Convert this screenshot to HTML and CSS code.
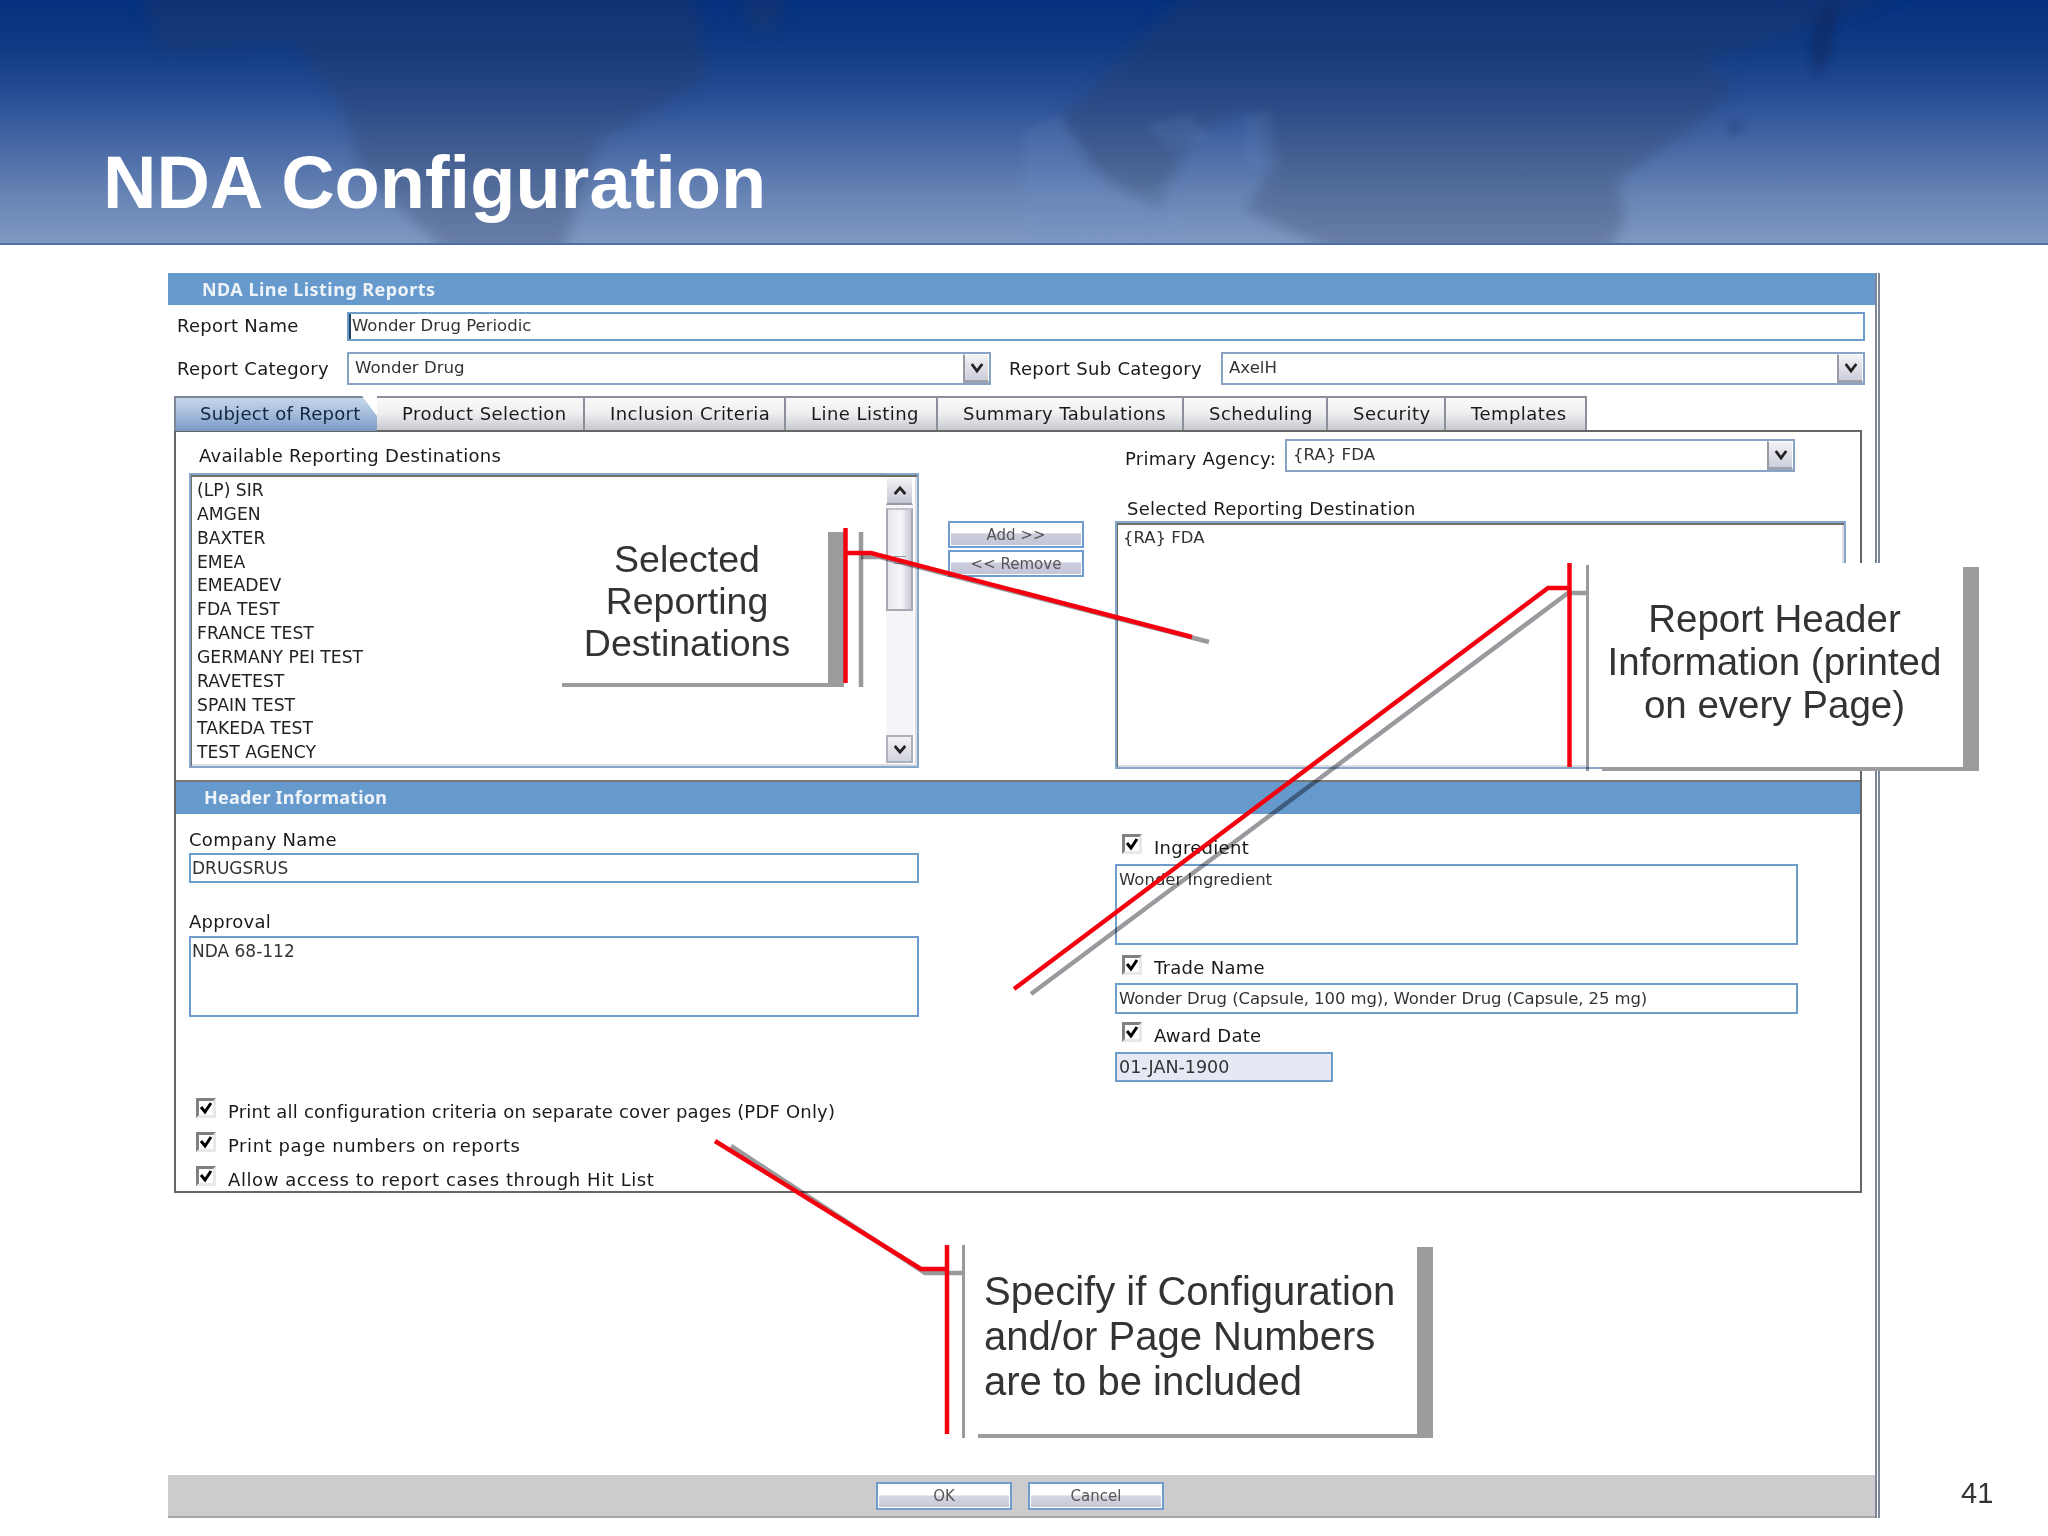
FILE: index.html
```html
<!DOCTYPE html>
<html lang="en">
<head>
<meta charset="utf-8">
<title>NDA Configuration</title>
<link rel="stylesheet" href="styles.css">
</head>
<body>
<div class="slide">
  <header class="banner">
    <svg class="map" viewBox="0 0 2048 243" preserveAspectRatio="none" aria-hidden="true">
      <defs>
        <filter id="soft"><feGaussianBlur stdDeviation="7"/></filter>
        <filter id="softer"><feGaussianBlur stdDeviation="4"/></filter>
      </defs>
      <g filter="url(#soft)" fill="#2a3a5c" opacity=".28">
        <path d="M137 -10 160 50 295 45 345 110 360 170 455 260 560 260 600 140 705 80 700 -10Z"/>
        <path d="M735 -10 790 -10 775 35 750 30Z"/>
        <path d="M1187 -10 1912 -10 1808 30 1704 60 1735 85 1704 120 1658 152 1618 180 1625 217 1605 260 1350 260 1246 210 1270 170 1250 110 1200 130 1180 160 1160 210 1090 170 1060 120 1120 60Z"/>
      </g>
      <g filter="url(#softer)" fill="#7394cc" opacity=".16">
        <path d="M1024 130 1060 115 1100 170 1130 200 1175 175 1180 240 1024 243Z"/>
        <path d="M1145 125 1190 115 1210 140 1170 150Z"/>
        <path d="M1245 115 1270 110 1280 170 1250 170Z"/>
      </g>
      <g filter="url(#softer)" fill="#0c2454" opacity=".4">
        <path d="M1815 15 1840 0 1830 60 1815 78 1810 50Z"/>
        <path d="M1730 120 1742 128 1730 135Z"/>
      </g>
    </svg>
    <h1 class="title">NDA Configuration</h1>
  </header>

  <main class="window">
    <div class="bar bar-top">NDA Line Listing Reports</div>

    <div class="row row-name">
      <span class="label">Report Name</span>
      <div class="field field-caret">Wonder Drug Periodic</div>
    </div>

    <div class="row row-cat">
      <span class="label">Report Category</span>
      <div class="select select-cat">
        <span class="select-value">Wonder Drug</span>
        <span class="select-btn"><svg viewBox="0 0 16 12"><path d="M2 2 8 10 14 2"/></svg></span>
      </div>
      <span class="label label-sub">Report Sub Category</span>
      <div class="select select-sub">
        <span class="select-value">AxelH</span>
        <span class="select-btn"><svg viewBox="0 0 16 12"><path d="M2 2 8 10 14 2"/></svg></span>
      </div>
    </div>

    <nav class="tabs">
      <span class="tab tab-active">Subject of Report</span>
      <span class="tab">Product Selection</span>
      <span class="tab">Inclusion Criteria</span>
      <span class="tab">Line Listing</span>
      <span class="tab">Summary Tabulations</span>
      <span class="tab">Scheduling</span>
      <span class="tab">Security</span>
      <span class="tab">Templates</span>
    </nav>

    <section class="panel">
      <div class="upper">
        <div class="col-left">
          <div class="cap">Available Reporting Destinations</div>
          <div class="listbox listbox-avail">
            <ul class="items">
              <li>(LP) SIR</li>
              <li>AMGEN</li>
              <li>BAXTER</li>
              <li>EMEA</li>
              <li>EMEADEV</li>
              <li>FDA TEST</li>
              <li>FRANCE TEST</li>
              <li>GERMANY PEI TEST</li>
              <li>RAVETEST</li>
              <li>SPAIN TEST</li>
              <li>TAKEDA TEST</li>
              <li>TEST AGENCY</li>
            </ul>
            <div class="scroll">
              <span class="scroll-btn"><svg viewBox="0 0 16 12"><path d="M2 10 8 3 14 10"/></svg></span>
              <span class="scroll-thumb"><i class="grip"></i></span>
              <span class="scroll-btn scroll-down"><svg viewBox="0 0 16 12"><path d="M2 2 8 9 14 2"/></svg></span>
            </div>
          </div>
        </div>
        <div class="col-mid">
          <span class="btn btn-small">Add &gt;&gt;</span>
          <span class="btn btn-small">&lt;&lt; Remove</span>
        </div>
        <div class="col-right">
          <div class="agency">
            <span class="label label-agency">Primary Agency:</span>
            <div class="select select-agency">
              <span class="select-value">{RA} FDA</span>
              <span class="select-btn"><svg viewBox="0 0 16 12"><path d="M2 2 8 10 14 2"/></svg></span>
            </div>
          </div>
          <div class="cap cap-selected">Selected Reporting Destination</div>
          <div class="listbox listbox-sel"><div class="sel-value">{RA} FDA</div></div>
        </div>
      </div>

      <div class="bar bar-header">Header Information</div>

      <div class="lower">
        <div class="lower-left">
          <div class="cap cap-form">Company Name</div>
          <div class="field field-company">DRUGSRUS</div>
          <div class="cap cap-form cap-approval">Approval</div>
          <div class="field field-approval">NDA 68-112</div>
          <div class="checks">
            <label class="check check-tight"><span class="box"><svg viewBox="0 0 14 14"><path d="M2 6 6 11 12 2"/></svg></span>Print all configuration criteria on separate cover pages (PDF Only)</label>
            <label class="check check-wide"><span class="box"><svg viewBox="0 0 14 14"><path d="M2 6 6 11 12 2"/></svg></span>Print page numbers on reports</label>
            <label class="check check-wide"><span class="box"><svg viewBox="0 0 14 14"><path d="M2 6 6 11 12 2"/></svg></span>Allow access to report cases through Hit List</label>
          </div>
        </div>
        <div class="lower-right">
          <label class="check check-right"><span class="box"><svg viewBox="0 0 14 14"><path d="M2 6 6 11 12 2"/></svg></span>Ingredient</label>
          <div class="field field-ingredient">Wonder Ingredient</div>
          <label class="check check-right check-trade"><span class="box"><svg viewBox="0 0 14 14"><path d="M2 6 6 11 12 2"/></svg></span>Trade Name</label>
          <div class="field field-trade">Wonder Drug (Capsule, 100 mg), Wonder Drug (Capsule, 25 mg)</div>
          <label class="check check-right check-award"><span class="box"><svg viewBox="0 0 14 14"><path d="M2 6 6 11 12 2"/></svg></span>Award Date</label>
          <div class="field field-date">01-JAN-1900</div>
        </div>
      </div>
    </section>

    <footer class="footer">
      <span class="btn btn-foot">OK</span>
      <span class="btn btn-foot">Cancel</span>
    </footer>
  </main>

  <div class="page-number">41</div>

  <aside class="callout callout-dest">Selected<br>Reporting<br>Destinations</aside>
  <aside class="callout callout-head">Report Header<br>Information (printed<br>on every Page)</aside>
  <aside class="callout callout-spec">Specify if Configuration<br>and/or Page Numbers<br>are to be included</aside>

  <svg class="leaders" viewBox="0 0 2048 1536" aria-hidden="true">
    <g class="lead-grey">
      <path d="M861 532V687"/>
      <path d="M861 557H880L1209 642"/>
      <path d="M1587.500 565V771" class="thin"/>
      <path d="M1586 593H1568L1031 994"/>
      <path d="M963.500 1245V1438" class="thin"/>
      <path d="M962 1273H925L731 1146"/>
    </g>
    <g class="lead-red">
      <path d="M845.500 528V683"/>
      <path d="M847 553H871L1192 637"/>
      <path d="M1569.500 563V767"/>
      <path d="M1570 588H1548L1014 989"/>
      <path d="M947 1245V1434"/>
      <path d="M947 1269H921L715 1141"/>
    </g>
  </svg>
</div>
</body>
</html>
```

FILE: styles.css
```css
* { box-sizing: border-box; }
html, body { margin: 0; padding: 0; background: #fff; }
body { font-family: "DejaVu Sans", "Liberation Sans", sans-serif; color: #1a1a1a; }

.slide { position: relative; width: 2048px; height: 1536px; overflow: hidden; background: #fff; }

/* banner */
.banner {
  position: relative;
  height: 245px;
  border-bottom: 2px solid #4f6ea8;
  background: linear-gradient(180deg, #04307f 0%, #113b84 20%, #2a5096 42%, #4a6ba6 62%, #6a86b6 82%, #8098c2 100%);
  padding: 141px 0 0 103px;
}
.map { position: absolute; inset: 0; width: 100%; height: 100%; }
.title {
  position: relative;
  margin: 0;
  font: 700 74px/84px "Liberation Sans", Arial, sans-serif;
  color: #fff;
}

/* window */
.window {
  display: flex;
  flex-direction: column;
  width: 1712px;
  height: 1245px;
  margin: 28px 0 0 168px;
  border-right: 5px double #7d8799;
}
.bar {
  background: #6699cc;
  color: #eef3f9;
  font-family: "Noto Sans", "Liberation Sans", sans-serif;
  font-weight: 700;
  font-size: 18px;
  letter-spacing: .2px;
}
.bar-top { height: 32px; line-height: 33px; padding-left: 34px; letter-spacing: .45px; }

.row { display: flex; align-items: center; padding-left: 9px; }
.row-name { margin-top: 7px; height: 29px; }
.row-cat { margin-top: 11px; height: 33px; }
.label { font-size: 18px; letter-spacing: .28px; white-space: nowrap; color: #1a1a1a; }
.row > .label:first-child { width: 170px; flex: none; }
.row-name .label { padding-bottom: 2px; }
.label-sub { margin-left: 18px; width: 212px; flex: none; }

.field {
  border: 2px solid #6f9dcb;
  background: #fff;
  color: #333;
  font-size: 16.500px;
  line-height: 27px;
  padding-left: 2px;
  white-space: nowrap;
}
.row-name .field { width: 1518px; height: 29px; box-shadow: inset 2px 0 0 #24405f; padding-left: 3px; line-height: 24px; }

.select {
  display: flex;
  justify-content: space-between;
  height: 33px;
  border: 2px solid #87a3c6;
  background: #fff;
  color: #333;
  font-size: 16.600px;
  line-height: 28px;
}
.select-value { padding-left: 6px; }
.select-cat { width: 644px; }
.select-sub { width: 644px; }
.select-agency { width: 510px; }
.select-btn {
  display: flex;
  align-items: center;
  justify-content: center;
  width: 26px;
  border: 1px solid #fff;
  border-left: 2px solid #9a9aa6;
  border-bottom: 3px solid #9ea1ad;
  background: linear-gradient(180deg, #f2f2f6, #ccced9);
}
.select-btn svg, .scroll-btn svg { width: 14px; height: 11px; }
.select-btn path, .scroll-btn path { fill: none; stroke: #222; stroke-width: 3.200; }

/* tabs */
.tabs {
  display: grid;
  grid-template-columns: 203px 208px 201px 152px 246px 144px 118px 141px;
  width: max-content;
  height: 34px;
  margin: 11px 0 0 6px;
}
.tab {
  padding-left: 25px;
  border: 2px solid #8b8f9b;
  border-width: 2px 2px 0 0;
  background: linear-gradient(180deg, #fafafa 0%, #efeff1 45%, #c6c8cf 100%);
  font-size: 18px;
  letter-spacing: .45px;
  line-height: 31px;
  white-space: nowrap;
  color: #1a1a1a;
}
.tab-active {
  padding-left: 26px;
  border: 0;
  background: linear-gradient(180deg, #c9d8ec 0%, #a6bedd 50%, #7a9ac4 100%);
  clip-path: polygon(0 0, 188px 0, 100% 20px, 100% 100%, 0 100%);
  box-shadow: inset 2px 2px 0 #7d8696;
  color: #10233f;
  letter-spacing: .28px;
  line-height: 35px;
}

.panel {
  display: flex;
  flex-direction: column;
  width: 1688px;
  height: 763px;
  margin-left: 6px;
  border: 2px solid #666;
}
.upper { display: flex; flex: none; height: 348px; padding-left: 13px; }
.col-left { width: 730px; padding-top: 12px; flex: none; }
.col-mid { display: flex; flex-direction: column; gap: 2px; width: 136px; margin-left: 29px; padding-top: 89px; flex: none; }
.col-right { width: 731px; margin-left: 31px; padding-top: 7px; flex: none; }

.cap { height: 24px; line-height: 24px; font-size: 18px; letter-spacing: .28px; color: #1a1a1a; white-space: nowrap; }
.col-left .cap { padding-left: 10px; }

.listbox {
  border: 2px solid #84a7cb;
  background: #fff;
  box-shadow: inset 1px 2px 0 #6e6e66, inset -2px -2px 0 #dedee2;
}
.listbox-avail { display: flex; height: 295px; margin-top: 5px; padding: 2px 4px 3px 0; }
.items {
  flex: 1;
  list-style: none;
  margin: 0;
  padding: 2px 0 0 6px;
  font-size: 17.200px;
  color: #222;
}
.items li { height: 23.850px; line-height: 23.850px; white-space: nowrap; }

.scroll { display: flex; flex-direction: column; width: 27px; background: #f4f4f9; }
.scroll-btn {
  display: flex;
  align-items: center;
  justify-content: center;
  height: 28px;
  border: 1px solid #fff;
  border-bottom: 2px solid #9a9aa6;
  background: linear-gradient(180deg, #f2f2f6, #c4c6d2);
}
.scroll-down { margin-top: auto; border: 2px solid #aeb0ba; background: linear-gradient(180deg, #f2f2f6, #d2d3dd); }
.scroll-thumb {
  display: flex;
  align-items: center;
  justify-content: center;
  height: 103px;
  margin-top: 3px;
  border: 2px solid #a8a8b2;
  border-top-color: #c0c0c8;
  background: linear-gradient(90deg, #e6e6ee, #f6f6fa 55%, #c8c9d6);
}
.grip { display: block; width: 12px; height: 8px; border-top: 1px solid #9a9aa6; border-bottom: 1px solid #9a9aa6; }

.btn {
  display: block;
  text-align: center;
  color: #555;
  border: 2px solid #6f9dd0;
  box-shadow: inset 0 0 0 1px #fff;
  white-space: nowrap;
}
.btn-small {
  height: 27px;
  font-size: 15px;
  line-height: 24px;
  background: linear-gradient(180deg, #fff 0%, #fff 45%, #cbccdc 46%, #c4c5d6 100%);
}

.agency { display: flex; align-items: center; height: 33px; padding-left: 10px; }
.label-agency { width: 160px; flex: none; position: relative; top: 3px; }
.select-agency .select-value { line-height: 28px; }
.cap-selected { margin-top: 25px; padding-left: 12px; }
.listbox-sel { height: 248px; padding: 3px 0 0 6px; font-size: 16.500px; color: #333; line-height: 24px; }
.sel-value { padding-left: 0; }

.bar-header {
  height: 34px;
  flex: none;
  line-height: 30px;
  padding-left: 28px;
  border-top: 2px solid #777;
}

.lower { display: flex; flex: 1; min-height: 0; padding-left: 13px; }
.lower-left { width: 730px; padding-top: 14px; flex: none; }
.lower-right { width: 683px; margin-left: 196px; padding-top: 17px; flex: none; }

.cap-form { line-height: 24px; }
.col-left .cap.cap-form { padding-left: 0; }
.field-company { height: 30px; margin-top: 1px; font-size: 17px; padding-left: 1px; }
.cap-approval { margin-top: 27px; }
.field-approval { height: 81px; margin-top: 2px; font-size: 17px; padding-left: 1px; }
.checks { margin-top: 78px; }

.check {
  display: flex;
  align-items: flex-start;
  height: 34px;
  padding-left: 7px;
  font-size: 18px;
  letter-spacing: .28px;
  line-height: 34px;
  color: #1a1a1a;
  white-space: nowrap;
}
.check-tight { letter-spacing: .2px; }
.check-wide { letter-spacing: .58px; }
.box {
  display: flex;
  align-items: center;
  justify-content: center;
  width: 20px;
  height: 20px;
  margin: 3px 12px 0 0;
  flex: none;
  background: #fff;
  border: 3px solid #e8e8e8;
  border-top-color: #808080;
  border-left-color: #808080;
}
.box svg { width: 14px; height: 14px; }
.box path { fill: none; stroke: #000; stroke-width: 3; }

.check-right { height: 33px; }
.check-trade { height: 32px; margin-top: 6px; }
.check-trade .box { margin-top: 4px; }
.check-award { margin-top: 5px; height: 33px; }
.field-ingredient { height: 81px; }
.field-trade { height: 31px; letter-spacing: -.09px; }
.field-date { width: 218px; height: 30px; background: #e6e8f4; font-size: 17.500px; }

.footer {
  display: flex;
  flex: none;
  gap: 16px;
  height: 43px;
  margin-top: auto;
  padding: 7px 0 0 708px;
  background: #cccccf;
  border-bottom: 2px solid #a6a6aa;
}
.btn-foot {
  width: 136px;
  height: 28px;
  font-size: 15px;
  line-height: 25px;
  background: linear-gradient(180deg, #fff 0%, #fff 45%, #d6d6e2 50%, #c6c7d6 100%);
}

.page-number {
  position: absolute;
  left: 1961px;
  top: 1476px;
  font: 400 29px/34px "Liberation Sans", Arial, sans-serif;
  color: #333;
}

/* callouts lying over the form */
.callout {
  position: absolute;
  background: #fff;
  color: #333;
  font: 400 40px/43px "Liberation Sans", Arial, sans-serif;
  white-space: nowrap;
}
.callout::before {
  content: "";
  position: absolute;
  left: 100%;
  top: 4px;
  bottom: -4px;
  width: 16px;
  background: #9c9c9f;
}
.callout::after {
  content: "";
  position: absolute;
  left: 16px;
  right: -16px;
  top: 100%;
  height: 4px;
  background: #9c9c9f;
}
.callout-dest { left: 546px; top: 528px; width: 282px; height: 155px; padding-top: 10px; text-align: center; font-size: 37.500px; line-height: 42px; }
.callout-head { left: 1586px; top: 563px; width: 377px; height: 204px; padding-top: 34px; text-align: center; font-size: 38.500px; }
.callout-spec { left: 962px; top: 1243px; width: 455px; height: 191px; padding: 26px 0 0 22px; line-height: 45px; }

.leaders { position: absolute; inset: 0; width: 2048px; height: 1536px; pointer-events: none; }
.leaders path { fill: none; stroke-width: 4.500; }
.lead-grey path { stroke: #9a9a9e; mix-blend-mode: multiply; }
.lead-grey path.thin { stroke-width: 3; }
.lead-red path { stroke: #f4000f; }
```
